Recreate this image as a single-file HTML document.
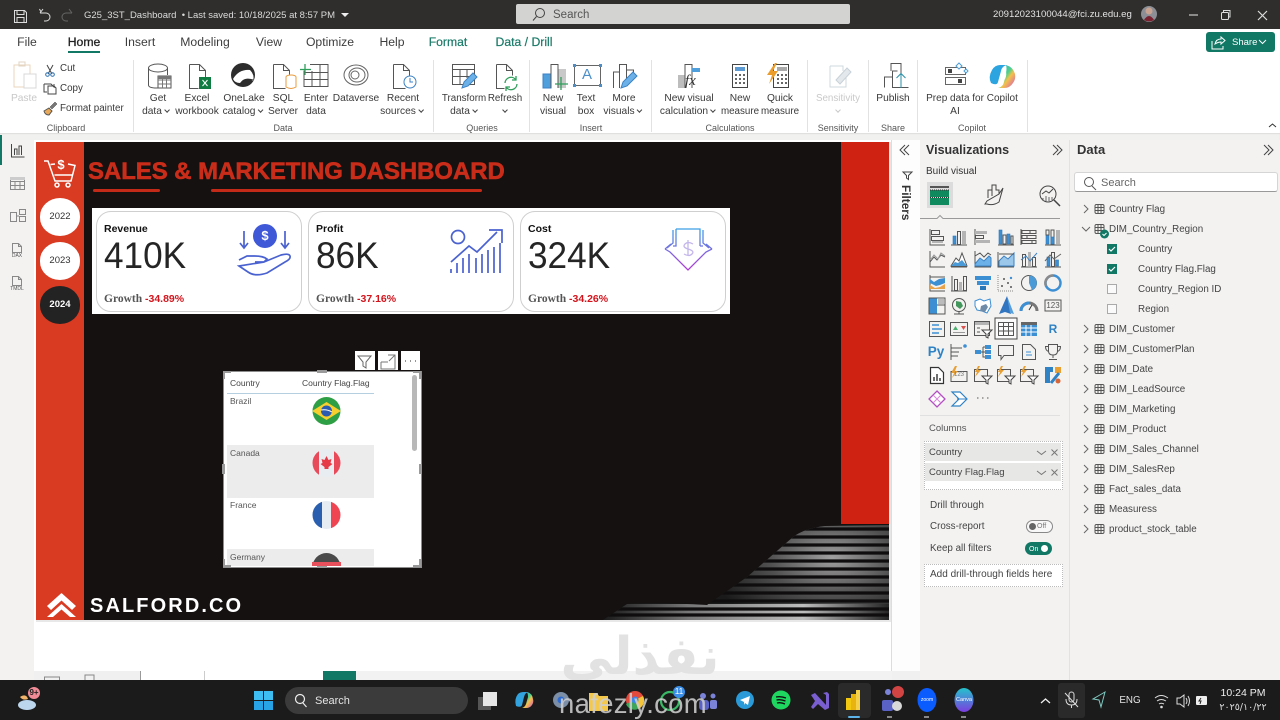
<!DOCTYPE html>
<html lang="en"><head><meta charset="utf-8"><title>G25_3ST_Dashboard</title>
<style>
html,body{margin:0;padding:0;width:1280px;height:720px;overflow:hidden;background:#f3f2f1;font-family:"Liberation Sans","DejaVu Sans",sans-serif;color:#333}
div{position:absolute}
.t{white-space:nowrap;line-height:14px}
.c{transform:translateX(-50%);text-align:center}
.tab{font-size:12.2px;top:35px;color:#3d3d3d}
.r{font-size:10.2px;color:#3a3a3a}
.gl{font-size:9px;color:#555;top:121px}
.sep{width:1px;top:60px;height:72px;background:#e2e2e2}
.d{font-size:9.8px;color:#444}
.v{display:inline-block;width:3px;height:3px;border-right:1px solid #444;border-bottom:1px solid #444;transform:rotate(45deg);margin:0 1px 2px 3px}
.k{fill:none;stroke:#555;stroke-width:1}
.h{fill:none;stroke:#888;stroke-width:1}
.b{fill:#3d8fd4;stroke:#2a78b8;stroke-width:.6}
.g{fill:#b4b4b4}
.w{fill:none;stroke:#fff;stroke-width:1.5}
.lb{fill:none;stroke:#3c82c4;stroke-width:1.2}
.kp{fill:none;stroke:#4a62d0;stroke-width:1.7}
.num{font-size:37px;line-height:38px;color:#252525;transform:scaleX(.95);transform-origin:left top;top:237px}
.gr{font:bold 11.5px/14px 'Liberation Serif',serif;color:#555;top:292px}
.gr span{font:bold 10.5px 'Liberation Sans',sans-serif;color:#d4141c}
</style></head><body>

<!-- chrome -->
<div style="left:0;top:0;width:1280px;height:29px;background:#2f2e2c"></div>
<div style="left:516px;top:4px;width:334px;height:20px;background:#d3d3d1;border-radius:2px"></div>
<div style="left:0;top:29px;width:1280px;height:104px;background:#fff"></div>
<div style="left:0;top:133px;width:1280px;height:7px;background:#f1f1f0;box-shadow:inset 0 1px 1px #dcdcdc"></div>
<div style="left:68px;top:51px;width:32px;height:2px;background:#117865"></div>
<div style="left:1206px;top:32px;width:69px;height:20px;background:#117865;border-radius:3px"></div>
<div class="sep" style="left:133px"></div><div class="sep" style="left:433px"></div><div class="sep" style="left:529px"></div><div class="sep" style="left:651px"></div><div class="sep" style="left:807px"></div><div class="sep" style="left:868px"></div><div class="sep" style="left:917px"></div><div class="sep" style="left:1027px"></div>

<!-- left nav + canvas -->
<div style="left:0;top:135px;width:2px;height:30px;background:#117865"></div>
<div style="left:34px;top:140px;width:858px;height:540px;background:#fff"></div>
<div style="left:34px;top:671px;width:106px;height:9px;background:#f0f0f0"></div>
<div style="left:140px;top:671px;width:1px;height:9px;background:#999"></div>
<div style="left:204px;top:671px;width:1px;height:9px;background:#ccc"></div>
<div style="left:323px;top:671px;width:33px;height:9px;background:#117865"></div>
<div style="left:356px;top:671px;width:536px;height:9px;background:#f2f2f2"></div>
<div style="left:891px;top:140px;width:1px;height:531px;background:#ddd"></div>
<div style="left:892px;top:140px;width:28px;height:531px;background:#fdfdfd"></div>
<div style="left:892px;top:671px;width:28px;height:9px;background:#f0f0f0"></div>
<div style="left:920px;top:140px;width:149px;height:540px;background:#f3f2f1"></div>
<div style="left:1069px;top:140px;width:1px;height:540px;background:#e2e2e2"></div>

<!-- report -->
<div style="left:36px;top:142px;width:853px;height:478px;background:#141110"></div>
<div style="left:36px;top:142px;width:48px;height:478px;background:#d93a22"></div>
<div style="left:841px;top:142px;width:48px;height:382px;background:#cf2213"></div>
<div style="left:889px;top:142px;width:2px;height:480px;background:#e6e6e6"></div>
<div style="left:36px;top:620px;width:855px;height:2px;background:#e8e8e8"></div>
<div style="left:93px;top:189px;width:67px;height:3px;background:#c32a18;border-radius:2px"></div>
<div style="left:211px;top:189px;width:271px;height:3px;background:#c32a18;border-radius:2px"></div>
<div style="left:40px;top:198px;width:40px;height:38px;background:#fff;border-radius:50%/48%"></div>
<div style="left:40px;top:242px;width:40px;height:38px;background:#fff;border-radius:50%/48%"></div>
<div style="left:40px;top:286px;width:40px;height:38px;background:#232323;border-radius:50%/48%"></div>
<div style="left:92px;top:208px;width:638px;height:106px;background:#fff"></div>
<div style="left:96px;top:211px;width:204px;height:99px;border:1px solid #cfcfcf;border-radius:15px;background:#fff"></div>
<div style="left:308px;top:211px;width:204px;height:99px;border:1px solid #cfcfcf;border-radius:15px;background:#fff"></div>
<div style="left:520px;top:211px;width:204px;height:99px;border:1px solid #cfcfcf;border-radius:15px;background:#fff"></div>

<!-- table visual -->
<div style="left:223px;top:371px;width:197px;height:195px;background:#fff;border:1px solid #8d8d8d"></div>
<div style="left:227px;top:393px;width:147px;height:1px;background:#b6cfe0"></div>
<div style="left:227px;top:445px;width:147px;height:53px;background:#ececec"></div>
<div style="left:227px;top:549px;width:147px;height:17px;background:#ececec"></div>
<div style="left:412px;top:375px;width:5px;height:76px;background:#b8b8b8;border-radius:3px"></div>
<div style="left:355px;top:351px;width:20px;height:19px;background:#fff"></div>
<div style="left:378px;top:351px;width:20px;height:19px;background:#fff"></div>
<div style="left:401px;top:351px;width:19px;height:19px;background:#fff"></div>

<!-- viz pane widgets -->
<div style="left:927px;top:182px;width:26px;height:26px;background:#dcdcdc"></div>
<div style="left:924px;top:441px;width:137px;height:47px;background:#fff;border:1px dotted #bbb"></div>
<div style="left:925px;top:443px;width:136px;height:18px;background:#e7e7e6"></div>
<div style="left:925px;top:463px;width:136px;height:18px;background:#e7e7e6"></div>
<div style="left:924px;top:564px;width:137px;height:21px;background:#fff;border:1px dotted #bbb"></div>
<div style="left:1026px;top:520px;width:25px;height:11px;border:1px solid #888;border-radius:7px;background:#f8f8f8"></div>
<div style="left:1029px;top:523px;width:7px;height:7px;background:#666;border-radius:50%"></div>
<div style="left:1025px;top:542px;width:27px;height:13px;background:#117865;border-radius:7px"></div>
<div style="left:1041px;top:545px;width:7px;height:7px;background:#fff;border-radius:50%"></div>
<div style="left:1074px;top:172px;width:202px;height:18px;background:#fff;border:1px solid #d5d5d5;border-bottom-color:#999;border-radius:3px"></div>

<!-- taskbar -->
<div style="left:0;top:680px;width:1280px;height:40px;background:#1b1b1b"></div>
<div style="left:285px;top:687px;width:183px;height:27px;background:#3b3b3b;border-radius:14px"></div>
<div style="left:838px;top:683px;width:33px;height:35px;background:#2a2a2a;border-radius:4px"></div>
<div style="left:1058px;top:683px;width:27px;height:35px;background:#2a2a2a;border-radius:3px"></div>
<div style="left:848px;top:716px;width:12px;height:2px;background:#5cb4e8;border-radius:1px"></div>
<div style="left:887px;top:716px;width:5px;height:2px;background:#888"></div>
<div style="left:924px;top:716px;width:5px;height:2px;background:#888"></div>
<div style="left:961px;top:716px;width:5px;height:2px;background:#888"></div>

<svg width="1280" height="720" viewBox="0 0 1280 720" style="position:absolute;left:0;top:0">
<defs>
<clipPath id="wave"><path d="M603 620L627 604Q660 602 707 605L747 577L793 537Q805 528 825 526L889 525V620Z"/></clipPath>
<radialGradient id="lit1" gradientUnits="userSpaceOnUse" cx="832" cy="558" r="125" gradientTransform="translate(832 558) scale(1 .6) translate(-832 -558)"><stop offset="0" stop-color="#a0a0a0"/><stop offset=".5" stop-color="#505050"/><stop offset="1" stop-color="#1a1a1a"/></radialGradient>
<linearGradient id="cost" x1="0" x2="0" y1="0" y2="1"><stop offset="0" stop-color="#3b9fe8"/><stop offset="1" stop-color="#b13ad6"/></linearGradient>
<linearGradient id="cop" x1="0" x2="1" y1="0" y2="1"><stop offset="0" stop-color="#2fa8e8"/><stop offset=".45" stop-color="#4fcf8a"/><stop offset=".6" stop-color="#f4c14a"/><stop offset="1" stop-color="#d24ec8"/></linearGradient>
<linearGradient id="canva" x1="0" x2="0" y1="0" y2="1"><stop offset="0" stop-color="#25c3cc"/><stop offset="1" stop-color="#7c3de0"/></linearGradient>
<linearGradient id="wv2" gradientUnits="userSpaceOnUse" x1="603" x2="889" y1="0" y2="0"><stop offset="0" stop-color="#1a1a1a"/><stop offset=".3" stop-color="#777"/><stop offset=".7" stop-color="#bdbdbd"/><stop offset="1" stop-color="#252525"/></linearGradient>
<clipPath id="cf1"><circle cx="326.5" cy="411" r="14"/></clipPath>
<clipPath id="cf2"><circle cx="326.5" cy="463" r="14"/></clipPath>
<clipPath id="cf3"><circle cx="326.5" cy="515" r="14"/></clipPath>
<clipPath id="cf4"><rect x="300" y="550" width="60" height="16"/></clipPath>
</defs>

<!-- stripes -->
<g clip-path="url(#wave)">
<rect x="600" y="520" width="290" height="100" fill="#1a1a1a"/>
<rect x="600" y="520" width="290" height="100" fill="url(#lit1)"/>
<rect x="603" y="604" width="286" height="16" fill="url(#wv2)"/>
<path stroke="#0f0d0d" stroke-width="3.2" fill="none" d="M600 529H890M600 537H890M600 545H890M600 553H890M600 561H890M600 569H890M600 577H890M600 585H890M600 593H890M600 601H890M600 609H890M600 615H890"/>
</g>

<!-- titlebar icons -->
<g fill="none" stroke="#ddd" stroke-width="1">
<path d="M14.5 10.500h10l2 2v10h-12zM17 10.500v4h7v-4M17 22.500v-5h7v5"/>
<path d="M41 12l-1.500-3 M40 13h6a4 4 0 0 1 0 8h-2M40 13l3-4"/>
</g>
<path d="M67 13h-1a4 4 0 0 0 0 8h2M72 13h-5M72 13l-3-4" fill="none" stroke="#666"/>
<path d="M341 13h8l-4 4z" fill="#eee"/>
<circle cx="540" cy="13" r="4.500" fill="none" stroke="#444"/><path d="M536.500 16.500l-3.500 4" stroke="#444" fill="none"/>
<circle cx="1149" cy="14" r="8" fill="#8c8f96"/><path d="M1144 20q5-8 10 0q-5 3-10 0z" fill="#7a2230"/><circle cx="1149" cy="11" r="3.500" fill="#c9a492"/>
<path d="M1189 15h9" stroke="#aaa" stroke-width="1.500"/>
<g fill="none" stroke="#ddd"><rect x="1221.500" y="12.500" width="7" height="7" rx="1"/><path d="M1223.500 12v-1.500h6.500v6.500h-1.500"/><path d="M1258 11l9 9M1267 11l-9 9" stroke-width="1.200"/></g>
<g fill="none" stroke="#fff"><path d="M1212 41v8h11v-3M1215 44q1-5 6-5v-2l4 3.500-4 3.500v-2q-3 0-6 2z"/><path d="M1259 40l3.500 3.500 3.500-3.500"/></g>
<path d="M1269 127l3.500-3 3.500 3" fill="none" stroke="#333"/>

<!-- bottom strip marks -->
<g fill="none" stroke="#888"><path d="M44.500 680v-3h15v3M85 680v-5h9v5"/></g>

<!-- clipboard -->
<g fill="none" stroke="#d8d8d8"><path d="M14 65h16v22H14z" stroke="#e9d6bc"/><rect x="19" y="62" width="6" height="4" stroke="#e0d5c5"/><rect x="24" y="74" width="12" height="14" fill="#fff"/></g>
<g fill="none" stroke="#444"><path d="M47 65l5 9M53 65l-5 9"/><circle cx="47.500" cy="74.500" r="1.800" stroke="#2a6fb0"/><circle cx="52.500" cy="74.500" r="1.800" stroke="#2a6fb0"/><path d="M44 84h7l3 3v-3M44 84v8h3M48 86h6l2 2v6h-8z"/></g>
<path d="M44 111l5-3 3 3-3 4q-4 0-5-4z" fill="#e8a95a" stroke="#555"/><path d="M50 107l5-5 2 2-5 5z" fill="#777" stroke="#444" stroke-width=".5"/>

<!-- data group -->
<g class="k">
<path class="k" d="M148.500 68v17q0 3 8 3h2M167.500 68v7"/><ellipse class="k" cx="158" cy="68" rx="9.500" ry="4"/>
<path class="k" d="M189.500 64.500h10l6 6v7M189.500 64.500v24h9M199.500 64.500v6h6"/>
<path class="k" d="M273.500 64.500h10l6 6v4M273.500 64.500v24h12M283.500 64.500v6h6"/>
<path class="k" d="M393.500 64.500h10l6 6v5M393.500 64.500v24h12M403.500 64.500v6h6"/>
</g>
<rect x="158" y="76" width="13" height="12" fill="#fff" stroke="#555"/><path d="M158 80h13M158 84h13M162.500 76v12M166.500 76v12" stroke="#777" fill="none"/><rect x="158" y="76" width="13" height="3" fill="#777"/>
<rect x="199" y="77" width="12" height="12" fill="#107c41"/><path d="M202.500 80l5 6M207.500 80l-5 6" stroke="#fff" fill="none"/>
<circle cx="243" cy="75" r="12" fill="#2d2d2d"/><path d="M233 79q6-10 17-9 5 5 3 11-7-5-13 2-5 0-7-4z" fill="#fff"/><path d="M240 85q3-8 13-5" stroke="#2d2d2d" fill="none"/>
<ellipse cx="291" cy="77" rx="5" ry="2" fill="#fff" stroke="#e89a3c"/><path d="M286 77v10q5 3 10 0V77" fill="#fff" stroke="#e89a3c"/>
<g class="k"><path class="k" d="M310 64.500h18v22h-24v-16M304 72.500h24M304 79.500h24M312 71v15M320 64v22"/></g><path d="M305 64v11M300 69.500h11" stroke="#2f9e5b" stroke-width="1.300" fill="none"/>
<g fill="none" stroke="#666"><ellipse cx="356" cy="75" rx="12" ry="10"/><ellipse cx="357" cy="75" rx="8" ry="7"/><ellipse cx="355" cy="75" rx="4" ry="4"/></g>
<circle cx="410" cy="82" r="6" fill="#fff" stroke="#3c82c4"/><path d="M410 78v4h3" stroke="#3c82c4" fill="none"/>

<!-- queries -->
<g class="k"><path class="k" d="M452.500 64.500h22v20h-22zM452.500 69.500h22M452.500 76.500h20M460 70v14M467 70v8"/></g><path d="M462 88l2-6 9-9 4 4-9 9z" fill="#6cb2e8" stroke="#3c82c4"/>
<g class="k"><path class="k" d="M496.500 64.500h10l6 6v5M496.500 64.500v24h8M506.500 64.500v6h6"/></g><g fill="none" stroke="#2f9e5b" stroke-width="1.300"><path d="M505 83a6 6 0 0 1 11-3M517 84a6 6 0 0 1-11 3M516 76v4h-4M506 91v-4h4"/></g>

<!-- insert -->
<rect x="543" y="74" width="8" height="14" fill="#4e9fdc" stroke="#3c82c4"/><rect x="558" y="69" width="8" height="19" fill="#c8c8c8"/><path d="M551 88V64.500h7V88" fill="none" stroke="#555"/><path d="M561 77v13M555 84h13" stroke="#2f9e5b" stroke-width="1.300"/>
<rect x="574.500" y="65.500" width="26" height="20" fill="none" stroke="#666"/><g fill="#4c8fc8"><rect x="573" y="64" width="3" height="3"/><rect x="599" y="64" width="3" height="3"/><rect x="573" y="84" width="3" height="3"/><rect x="599" y="84" width="3" height="3"/></g>
<path d="M613.500 88V72h6v16M619.500 88V64.500h7V84M626.500 70h7v5" fill="none" stroke="#555"/><path d="M621 88l2-6 10-10 4 4-10 10z" fill="#6cb2e8" stroke="#3c82c4"/>

<!-- calcs -->
<rect x="678" y="75" width="7" height="13" fill="#bdbdbd"/><path d="M685 88V64.500h7V88" fill="none" stroke="#555"/><rect x="692" y="68" width="8" height="4" fill="#4e9fdc"/>
<rect x="732.500" y="64.500" width="15" height="23" fill="#fff" stroke="#444"/><rect x="735" y="67" width="10" height="4" fill="#5c9ad4"/><path d="M735 75h2M739 75h2M743 75h2M735 79h2M739 79h2M743 79h2M735 83h2M739 83h2M743 83h2" stroke="#333" stroke-width="1.500"/>
<rect x="773.500" y="64.500" width="15" height="23" fill="#fff" stroke="#444"/><rect x="777" y="67" width="10" height="4" fill="#aaa"/><path d="M777 75h2M781 75h2M785 75h2M777 79h2M781 79h2M785 79h2M777 83h2M781 83h2M785 83h2" stroke="#333" stroke-width="1.500"/><path d="M775 63l-8 12h5l-3 9 9-13h-5l4-8z" fill="#eb9d2c"/>

<!-- sensitivity -->
<path d="M830 66h13v5M830 66v21h16V78" fill="none" stroke="#cfd8de"/><path d="M836 80l11-12 4 4-11 12z" fill="#e3e8ec" stroke="#c8d2d8"/>
<!-- publish -->
<path d="M884.500 87.500V77h8v10.500h16M892.500 80V71h5M891 71v-7.500h10V80" fill="none" stroke="#555"/><path d="M901 88V74M896.500 78l4.500-4.500 4.500 4.500" fill="none" stroke="#2a8fa8"/>
<!-- prep -->
<rect x="945.500" y="67.500" width="20" height="7" fill="#fff" stroke="#666"/><rect x="945.500" y="77.500" width="20" height="7" fill="#fff" stroke="#666"/><rect x="948" y="69" width="4" height="4" fill="#444"/><rect x="958" y="79" width="4" height="4" fill="#444"/><path d="M959 63l3 3-3 3-3-3zM966 69l2 2-2 2-2-2z" fill="#fff" stroke="#4c9ed8"/>
<path d="M991 83q-3-6 1-13 3-5 8-5h7q-5 1-6 6l-3 11q-1 4-7 1z" fill="#2ca4e0"/><path d="M1006 65q7 2 9 9 1 5-2 9-3 5-9 5h-6q5-1 6-6l2-9q1-5 0-8z" fill="url(#cop)"/><ellipse cx="1003" cy="76" rx="3" ry="6" fill="#fff" transform="rotate(15 1003 76)"/>

<!-- left nav -->
<g fill="none" stroke="#444"><path d="M11.500 144v13h13M14.500 155v-6h2.500v6M19 155v-9h2.500v9" /></g>
<g fill="none" stroke="#888"><path d="M10.500 177.500h14v12h-14zM10.500 181.500h14M10.500 185.500h14M15 181v8M20 181v8"/><rect x="10" y="177" width="15" height="3" fill="#ccc" stroke="none"/>
<path d="M10.500 212.500h6v9h-6zM19.500 209.500h6v5h-6zM19.500 216.500h6v5h-6zM16 216h3"/>
<path d="M12.500 243.500h6l3 3v6h-9zM18.500 243.500v3h3M12.500 276.500h6l3 3v6h-9zM18.500 276.500v3h3"/></g>

<!-- report graphics -->
<g class="w"><path class="w" d="M44 161h4l7 20h16l4-15.500-7-1.500M55 164l-4.500.5M54.500 175h18"/><circle class="w" cx="57" cy="185" r="2"/><circle class="w" cx="68" cy="185" r="2"/></g>
<path d="M47 606l14.500-13L76 606l-4 4-10.500-9.500L51 610zM47 617l14.500-13L76 617h-6l-8.500-7.500L53 617z" fill="#fff"/>

<!-- revenue icon -->
<circle cx="265" cy="236" r="12" fill="#3e58d8"/>
<g class="kp"><path class="kp" d="M244 231v17M240 243l4 5 4-5M285 231v17M281 243l4 5 4-5M239 260l8-4h8q8 0 12 3l-3 3h-9M264 262l17-7q8-2 9 1t-5 6l-18 11q-12 4-19-1l-9-6z"/></g>

<!-- profit icon -->
<circle cx="458" cy="237" r="6.500" class="kp"/>
<g class="kp"><path class="kp" d="M451 262l18-16 8 6 20-20M489 230h13v13M451 269v4M457 263v10M463 258v15M469 254v19M476 258v15M482 254v19M488 250v23M494 247v26M500 243v30"/></g>
<!-- cost icon -->
<path d="M676 229h24v17M676 229v17h-3M700 246h3M665 249l5 3 18 18 18-18 6-3M665 249l6-5M712 249l-6-5M673 230v13l-6 5M703 230v13l6 5" fill="none" stroke="url(#cost)" stroke-width="1.300"/>
<path d="M688 240v16M693 244q-5-3-8 0t3 5q7 2 4 5t-8 0" fill="none" stroke="#c3b6ec" stroke-width="1.300"/>

<!-- visual header icons -->
<g fill="none" stroke="#666"><path d="M358 356h13l-5 6v6l-3-2v-4z"/><path d="M381 362v7h14V355h-7M388 362h-7M395 355l-6 6M391 355h4v4" stroke="#777"/></g>
<path d="M405 361h1M410 361h1M415 361h1" stroke="#555" stroke-width="1.200"/>
<!-- handles -->
<g fill="#9a9a9a"><path d="M223 371h8v2h-6v6h-2zM421 371h-8v2h6v6h2zM223 567h8v-2h-6v-6h-2zM421 567h-8v-2h6v-6h2z"/><rect x="317" y="370" width="10" height="3"/><rect x="317" y="565" width="10" height="3"/><rect x="222" y="464" width="3" height="10"/><rect x="419" y="464" width="3" height="10"/></g>

<!-- flags -->
<g clip-path="url(#cf1)"><rect x="312" y="397" width="29" height="28" fill="#2e9f44"/><path d="M312 411l14.500-9 14.500 9-14.500 9z" fill="#f7cf2e"/><circle cx="326.500" cy="411" r="5.500" fill="#2a5bb0"/><path d="M321 410q6-1 11 2" stroke="#fff" fill="none"/></g>
<g clip-path="url(#cf2)"><rect x="312" y="449" width="29" height="28" fill="#e8edf2"/><rect x="312" y="449" width="7" height="28" fill="#e84a5a"/><rect x="334" y="449" width="7" height="28" fill="#e84a5a"/><path d="M326.500 456l2 4 3-1-1 4 2 1-4 3v2h-4v-2l-4-3 2-1-1-4 3 1z" fill="#e63a46"/></g>
<g clip-path="url(#cf3)"><rect x="312" y="501" width="10" height="28" fill="#2a5fb0"/><rect x="322" y="501" width="9" height="28" fill="#e6ecf2"/><rect x="331" y="501" width="10" height="28" fill="#ef4452"/></g>
<g clip-path="url(#cf4)"><circle cx="326.500" cy="567" r="14" fill="#4a4a4a"/><rect x="312" y="562" width="29" height="6" fill="#e8505c"/></g>

<!-- right strip -->
<g fill="none" stroke="#444"><path d="M909 145l-5 5 5 5M905 145l-5 5 5 5"/><path d="M903 172h9l-3.500 3.500v4l-2-1.500v-2.500z"/><path d="M1053 145l5 5-5 5M1057 145l5 5-5 5M1264 145l5 5-5 5M1268 145l5 5-5 5"/></g>

<!-- viz tabs -->
<rect x="930" y="186" width="19" height="2" fill="#555"/><rect x="930" y="190" width="19" height="7" fill="#0f8a5f"/><rect x="930" y="198" width="19" height="7" fill="#0f8a5f"/><path d="M930 197.500h19M930 190h19" stroke="#333" stroke-dasharray="1 1"/>
<g fill="none" stroke="#444"><path d="M988 198v-8h4v-5h4v5h3v4M992 190v6M985 204l2-3 12-7 4-6-4 14q-6 4-12 2z"/></g>
<g fill="none" stroke="#444"><circle cx="1048" cy="194" r="8"/><path d="M1054 200l6 6" stroke-width="1.500"/><path d="M1042 194l4-3 3 2 4-4"/><path d="M1043 201v-3M1046 201v-5M1049 201v-4M1052 200v-3" stroke="#666"/></g>
<path d="M920 218.500h17l3-3 3 3h117" fill="none" stroke="#999"/>
<path d="M920 415.500h140" stroke="#e0e0e0"/>

<!-- viz grid -->
<g transform="translate(937,237)"><path class="k" d="M-7-8V8H8"/><rect class="k" x="-5.500" y="-6.500" width="8" height="4"/><rect class="k" x="-5.500" y="-.5" width="12" height="4"/><rect class="g" x="-5" y="4" width="11" height="2"/></g>
<g transform="translate(959,237)"><path class="k" d="M-8 8H8"/><rect class="b" x="-6" y="-1" width="3" height="8"/><rect class="k" x="-1.500" y="-5.500" width="3" height="13"/><rect class="g" x="3" y="-6" width="4" height="13"/></g>
<g transform="translate(983,237)"><path class="k" d="M-8-8V8"/><rect class="g" x="-8" y="-6" width="12" height="3"/><rect class="k" x="-7.500" y="-1.500" width="8" height="3"/><rect class="g" x="-8" y="3" width="15" height="3"/></g>
<g transform="translate(1006,237)"><path class="k" d="M-8 8H8"/><rect class="b" x="-7" y="-7" width="3" height="14"/><rect class="k" x="-3" y="-2" width="3" height="9"/><rect class="b" x="1" y="-3" width="3" height="10"/><rect class="k" x="5" y="-1" width="2" height="8"/></g>
<g transform="translate(1029,237)"><path class="k" d="M-8-8V8"/><path class="k" d="M-7-6.500H7v3H-7zM-7-1.500H7v3H-7zM-7 3.500H7v3H-7zM1-7v4M-2-2v4M3 3v4"/></g>
<g transform="translate(1053,237)"><path class="k" d="M-8 8H8"/><rect class="b" x="-7" y="-2" width="3" height="9"/><rect class="k" x="-7" y="-7" width="3" height="5"/><rect class="k" x="-2" y="-7" width="3" height="14"/><rect class="b" x="-2" y="0" width="3" height="7"/><rect class="g" x="3" y="-7" width="4" height="14"/></g>

<g transform="translate(937,259)"><path class="k" d="M-7-8V8H8M-7 3l4-5 3 3 4-5 4 2"/><path d="M-6 0l3-4 4 4 3-6 4 3" fill="none" stroke="#999"/></g>
<g transform="translate(959,259)"><path d="M-8 7L-3-1l3 3 3-8 5 13z" fill="#fff" stroke="#555"/><path d="M-8 7l4-4 3 1 4-3 5 6z" fill="#4a9ad8"/><path class="k" d="M-8 8H8"/></g>
<g transform="translate(983,259)"><path class="k" d="M-8-8V8H8M-8-3l5-3 4 4 4-4 3 2"/><path d="M-8 5l5-6 4 3 5-5 2 2v8H-8z" fill="#6cb2e8" stroke="#3c82c4"/></g>
<g transform="translate(1006,259)"><path class="k" d="M-8-7V8H8"/><path d="M-7 2l5-5 4 3 6-6V7H-7z" fill="#9bc7ea" stroke="#3c82c4"/><path d="M-7-5H8" stroke="#555"/></g>
<g transform="translate(1029,259)"><path class="k" d="M-8 8H8"/><rect class="k" x="-6.500" y="-4.500" width="3" height="12"/><rect class="g" x="-1" y="-7" width="3" height="14"/><rect class="k" x="3.500" y="-1.500" width="3" height="9"/><path d="M-8 1l5-4 4 5 7-8" fill="none" stroke="#3c82c4"/></g>
<g transform="translate(1053,259)"><path class="k" d="M-8 8H8"/><rect class="b" x="-6" y="-2" width="3" height="9"/><rect class="k" x="-1.500" y="-6.500" width="3" height="14"/><rect class="b" x="2.500" y="1" width="3" height="6"/><path d="M-8 2l5-6 4 4 7-5" fill="none" stroke="#666"/></g>

<g transform="translate(937,283)"><path class="k" d="M-7-8V8H8M-7-6H8"/><path d="M-7-4l4 3 5-3 6-1v5l-5 2-4 1-6-3z" fill="#3d8fd4"/><path d="M-7 2l5 3 5-1 5-3v5H-7z" fill="#e8a24a"/></g>
<g transform="translate(959,283)"><path class="k" d="M-8 8H8M-7-7V8"/><rect class="k" x="-4.500" y="-3.500" width="3" height="11"/><rect class="g" x="0" y="-1" width="3" height="8"/><rect class="k" x="4.500" y="-6.500" width="3" height="14"/></g>
<g transform="translate(983,283)"><rect x="-8" y="-7" width="16" height="4" fill="#3d8fd4"/><rect x="-6" y="-2" width="12" height="4" fill="#3d8fd4"/><rect x="-3" y="3" width="6" height="4" fill="#2a78b8"/></g>
<g transform="translate(1006,283)"><path class="h" d="M-8-8V8H8" stroke-dasharray="1 1"/><g fill="#555"><circle cx="-4" cy="3" r="1"/><circle cx="-2" cy="-4" r="1"/><circle cx="2" cy="0" r="1"/><circle cx="5" cy="4" r="1"/></g><circle cx="5" cy="-5" r="1.200" fill="#3d8fd4"/></g>
<g transform="translate(1029,283)"><circle class="k" r="7.500"/><path d="M0 0V-7.500A7.500 7.500 0 0 1 3 7z" fill="#4a9ad8"/></g>
<g transform="translate(1053,283)"><circle r="7.500" fill="none" stroke="#3d8fd4" stroke-width="2.500"/><path d="M0-7.500A7.500 7.500 0 0 0-7 3" fill="none" stroke="#8a8a8a" stroke-width="2.500"/></g>

<g transform="translate(937,306)"><rect x="-8" y="-8" width="8" height="16" fill="#3d8fd4"/><rect class="k" x="-8" y="-8" width="16" height="16"/><rect x="1" y="-7" width="6" height="5" fill="#bbb"/><path class="k" d="M0-1H8"/></g>
<g transform="translate(959,306)"><circle class="k" r="6.500" cy="-1"/><path d="M-3-5l5 1 2 4-3 3-4-3z" fill="#43975c"/><path class="k" d="M-5 8H5M0 6v2"/></g>
<g transform="translate(983,306)"><path d="M-8-5l5-2 4 2 6-2 1 7-4 7-5-2-5-1-2-4z" fill="#fff" stroke="#3d8fd4"/><path d="M-2 0l5-2 2 3-3 5-5-1z" fill="#6f8ba8"/></g>
<g transform="translate(1006,306)"><path d="M1-10L-7 8l6-2 6 2z" fill="#3174c0"/><path d="M1-10l7 18-4-1z" fill="#55a0dc"/></g>
<g transform="translate(1029,306)"><path d="M-8 5a8 8 0 0 1 16 0" fill="none" stroke="#777" stroke-width="3"/><path d="M-8 5a8 8 0 0 1 8-8" fill="none" stroke="#3d8fd4" stroke-width="3"/><path d="M0 4l3-5" stroke="#333"/></g>
<g transform="translate(1053,306)"><rect class="k" x="-8" y="-6" width="16" height="11"/></g>

<g transform="translate(937,329)"><rect class="k" x="-7.500" y="-7.500" width="15" height="15"/><path d="M-5-4H2M-5 0H5M-5 4H2" stroke="#3d8fd4" stroke-width="1.500"/></g>
<g transform="translate(959,329)"><rect class="k" x="-8.500" y="-6.500" width="17" height="13"/><path d="M-6 1l2.500-4 2.500 4z" fill="#4cae6e"/><path d="M2-3h5L4.500 1z" fill="#d9534f"/><path d="M-6 3.500H6" stroke="#999"/></g>
<g transform="translate(983,329)"><rect class="k" x="-8.500" y="-7.500" width="15" height="14"/><rect class="g" x="-8" y="-7" width="14" height="3"/><path class="k" d="M-6-1h3M-6 3h3"/><path d="M-1 1H9L5 5V9L3 8V5z" fill="#fff" stroke="#444"/></g>
<g transform="translate(1006,329)"><rect x="-11" y="-11" width="22" height="21" fill="#fbfbfb" stroke="#444"/><rect class="k" x="-7.500" y="-6.500" width="15" height="13"/><path class="k" d="M-7.500-2.500h15M-7.500 2h15M-2.500-6.500v13M2.500-6.500v13"/></g>
<g transform="translate(1029,329)"><rect x="-8" y="-7" width="16" height="14" fill="#3d8fd4"/><rect x="-8" y="-7" width="16" height="3" fill="#666"/><path d="M-8-1H8M-8 3H8M-3-4V7M2-4V7" stroke="#fff"/></g>

<g transform="translate(959,352)"><path class="k" d="M-8-8V8M-8-4H3M-8 0H0M-8 4H-1"/><circle cx="6" cy="-6" r="1.800" fill="#3d8fd4"/></g>
<g transform="translate(983,352)"><rect x="-8" y="-2" width="6" height="4" fill="#3d8fd4"/><rect x="2" y="-7" width="6" height="4" fill="#3d8fd4"/><rect x="2" y="-2" width="6" height="4" fill="#3d8fd4"/><rect x="2" y="3" width="6" height="4" fill="#3d8fd4"/><path class="k" d="M-2 0H2M0-5V5H2M0-5H2"/></g>
<g transform="translate(1006,352)"><path class="k" d="M-7.500-6.500h15v10H-2l-3 4v-4h-2.500z"/></g>
<g transform="translate(1029,352)"><path class="k" d="M-6.500-7.500h8l5 5v10h-13z"/><path d="M-3 0h5M-3 3h6" stroke="#3d8fd4"/></g>
<g transform="translate(1053,352)"><path class="k" d="M-4.500-7.500h9V-1q0 4-4.500 4t-4.500-4zM-4.500-5.500h-3q0 4 3 5M4.500-5.500h3q0 4-3 5M0 3v3M-4 7.500h8"/></g>

<g transform="translate(937,375)"><path d="M-6.500-7.500h8l5 5v11h-13z" fill="#fff" stroke="#333" stroke-width="1.200"/><path d="M-3 6V2M0 6V-1M3 6V3" stroke="#333" stroke-width="1.400"/></g>
<g transform="translate(959,375)"><rect class="k" x="-8" y="-3.500" width="16" height="10"/><path d="M-4-9l-4 7h3l-2 5 6-7H-4l2-5z" fill="#e8a035"/></g>
<g transform="translate(983,375)"><rect class="k" x="-8.500" y="-5.500" width="13" height="12"/><path d="M-1 1H9L5 5V9L3 8V5z" fill="#fff" stroke="#444"/><path d="M-5-9l-3 6h2l-2 5 6-7H-5l2-4z" fill="#e8a035"/></g>
<g transform="translate(1006,375)"><rect class="k" x="-8.500" y="-5.500" width="13" height="12"/><path d="M-1 1H9L5 5V9L3 8V5z" fill="#fff" stroke="#444"/><path d="M-5-9l-3 6h2l-2 5 6-7H-5l2-4z" fill="#e8a035"/></g>
<g transform="translate(1029,375)"><rect class="k" x="-8.500" y="-5.500" width="13" height="12"/><path d="M-1 1H9L5 5V9L3 8V5z" fill="#fff" stroke="#444"/><path d="M-5-9l-3 6h2l-2 5 6-7H-5l2-4z" fill="#e8a035"/></g>
<g transform="translate(1053,375)"><path d="M-8-8h8v5h-3V8h-5z" fill="#2f82c4"/><rect x="2" y="-8" width="6" height="6" fill="#e8a035"/><path d="M-2 8L6-2" stroke="#2f82c4" stroke-width="3"/><circle cx="5" cy="6" r="2.500" fill="#d4663a"/></g>

<g transform="translate(937,399)"><path d="M0-8L8 0 0 8-8 0z" fill="#fff" stroke="#b14fc0" stroke-width="1.300"/><path d="M-4-4L4 4M4-4L-4 4" stroke="#d986dd"/></g>
<g transform="translate(960,399)"><path d="M-8-7h8l7 7-7 7H-8l7-7z" fill="#fff" stroke="#2f82c4" stroke-width="1.200"/><path d="M-3 0h9" stroke="#2f82c4"/></g>
<path d="M977 398h1.500M982 398h1.500M987 398h1.500" stroke="#555"/>

<!-- well chevrons -->
<g fill="none" stroke="#777"><path d="M1037 451l4.500 3.500 4.500-3.500M1037 471l4.500 3.500 4.500-3.500M1051.500 449.500l6 6M1057.500 449.500l-6 6M1051.500 469.500l6 6M1057.500 469.500l-6 6"/></g>

<!-- data pane -->
<circle cx="1089" cy="182" r="4.500" fill="none" stroke="#555"/><path d="M1092 186l4 4" stroke="#555" fill="none"/>
<g fill="none" stroke="#666"><path d="M1084 205l4 4-4 4M1084 325l4 4-4 4M1084 345l4 4-4 4M1084 365l4 4-4 4M1084 385l4 4-4 4M1084 405l4 4-4 4M1084 425l4 4-4 4M1084 445l4 4-4 4M1084 465l4 4-4 4M1084 485l4 4-4 4M1084 505l4 4-4 4M1084 525l4 4-4 4M1082 227l4 4 4-4"/></g>
<defs><g id="tb"><rect x="-4.500" y="-4.500" width="9" height="9" rx="1.500" fill="none" stroke="#555"/><path d="M-4.500-1.500h9M-4.500 1.500h9M-1.500-4.500v9M1.500-4.500v9" stroke="#555"/></g></defs>
<use href="#tb" x="1099.500" y="209"/><use href="#tb" x="1099.500" y="229"/><use href="#tb" x="1099.500" y="329"/><use href="#tb" x="1099.500" y="349"/><use href="#tb" x="1099.500" y="369"/><use href="#tb" x="1099.500" y="389"/><use href="#tb" x="1099.500" y="409"/><use href="#tb" x="1099.500" y="429"/><use href="#tb" x="1099.500" y="449"/><use href="#tb" x="1099.500" y="469"/><use href="#tb" x="1099.500" y="489"/><use href="#tb" x="1099.500" y="509"/><use href="#tb" x="1099.500" y="529"/>
<circle cx="1104.500" cy="234" r="4.500" fill="#117865"/><path d="M1102.500 234l1.500 1.500 2.500-2.500" stroke="#fff" fill="none"/>
<rect x="1107" y="244" width="10" height="10" fill="#117865"/><path d="M1109 249l2 2 4-4" stroke="#fff" fill="none" stroke-width="1.200"/>
<rect x="1107" y="264" width="10" height="10" fill="#117865"/><path d="M1109 269l2 2 4-4" stroke="#fff" fill="none" stroke-width="1.200"/>
<rect x="1107.500" y="284.500" width="9" height="9" fill="#fafafa" stroke="#aaa"/><rect x="1107.500" y="304.500" width="9" height="9" fill="#fafafa" stroke="#aaa"/>

<!-- taskbar icons -->
<ellipse cx="27" cy="705" rx="9" ry="5" fill="#bcd6ee"/><path d="M20 697q6-4 8 2-5 2-8-2z" fill="#f2b36a"/><circle cx="34" cy="693" r="6" fill="#f08a96"/>
<g fill="#3dbdf2"><rect x="254" y="691" width="9" height="9"/><rect x="264" y="691" width="9" height="9"/><rect x="254" y="701" width="9" height="9" fill="#28a4e6"/><rect x="264" y="701" width="9" height="9" fill="#28a4e6"/></g>
<circle cx="300" cy="699" r="4.500" fill="none" stroke="#eee" stroke-width="1.200"/><path d="M303 703l3.500 4" stroke="#eee" stroke-width="1.200"/>
<rect x="478" y="697" width="13" height="13" fill="#555"/><rect x="483" y="692" width="14" height="14" fill="#e6e6e6"/>
<path d="M516 706q-2-7 2-12 2-2 6-2h4q-3 1-4 5l-2 8q-1 3-6 1z" fill="#33a3e0"/><path d="M527 692q5 1 6 7 1 3-1 6-2 3-6 3h-4q3-1 4-4l2-7q0-3-1-5z" fill="url(#cop)"/>
<circle cx="561" cy="700" r="8" fill="#7c8fa6"/><circle cx="561" cy="700" r="3.500" fill="#2d6bd0"/>
<path d="M589 693h8l2 3h9v15h-19z" fill="#f4c84a"/>
<circle cx="635" cy="700" r="9" fill="#e24a3c"/><path d="M635 700l8-4a9 9 0 0 1-5 13z" fill="#f4c43a"/><path d="M635 700l3 9a9 9 0 0 1-12-5z" fill="#3ea659"/><circle cx="635" cy="700" r="3.500" fill="#3c86e8"/>
<circle cx="670" cy="701" r="9" fill="none" stroke="#38b864" stroke-width="2.200"/><circle cx="679" cy="692" r="6" fill="#3c8fe8"/>
<circle cx="703" cy="696" r="3" fill="#7b83d8"/><circle cx="713" cy="696" r="2.500" fill="#7b83d8"/><rect x="699" y="700" width="10" height="10" rx="3" fill="#5a62c8"/><rect x="710" y="700" width="7" height="9" rx="2" fill="#7b83d8"/>
<circle cx="745" cy="700" r="9" fill="#2a9bd8"/><path d="M740 700l10-4-2 9-3-2-1 2v-3z" fill="#fff"/>
<circle cx="781" cy="700" r="9.500" fill="#1ed760"/><path d="M776 697q5-1 10 1M776.500 700q4-1 9 1M777 703q4-1 8 1" stroke="#111" stroke-width="1.300" fill="none"/>
<path d="M811 695l4-2 11 12v-10l-3-2 4-1 2 2v14l-4 2-7-6-5 5-2-2 4-6z" fill="#7a5fd0"/>
<rect x="846" y="698" width="5" height="12" fill="#f2c811"/><rect x="851" y="694" width="5" height="16" fill="#e8b30e"/><rect x="856" y="690" width="4" height="20" fill="#f5d04a"/>
<circle cx="888" cy="692" r="3" fill="#7b83d8"/><circle cx="898" cy="692" r="6" fill="#d24444"/><rect x="882" y="700" width="11" height="11" rx="2" fill="#5a62c8"/><circle cx="897" cy="706" r="5" fill="#d8d8d8"/>
<ellipse cx="927" cy="700" rx="9.500" ry="12" fill="#0b5cff"/>
<ellipse cx="964" cy="700" rx="9.500" ry="12" fill="url(#canva)"/>
<path d="M1041 703l4.500-4 4.500 4" fill="none" stroke="#eee" stroke-width="1.300"/>
<g fill="none" stroke="#ddd"><rect x="1069" y="692" width="5" height="10" rx="2.500"/><path d="M1066 699q0 6 5.500 6t5.500-6M1071.500 705v3M1065 693l13 14"/></g>
<path d="M1105 692l-12 7 6 1 2 7z" fill="none" stroke="#7fc8c0"/>
<g fill="none" stroke="#ddd"><path d="M1155 698q6-5 13 0M1157 701q4-3 9 0M1159 704q2-1.500 5 0"/><circle cx="1161.500" cy="707" r=".8" fill="#ddd"/><path d="M1177 698h3l4-3v12l-4-3h-3zM1186 698q2 3 0 6M1188 696q3 5 0 10"/></g>
<rect x="1196" y="696" width="11" height="9" fill="#eee" rx="1"/><path d="M1201 698l-2 3h2l-1 3" stroke="#222" fill="none"/>
</svg>

<!-- title bar text -->
<div class="t" style="left:84px;top:9px;font-size:9.500px;color:#dcdcdc">G25_3ST_Dashboard&nbsp; • Last saved: 10/18/2025 at 8:57 PM</div>
<div class="t" style="left:553px;top:8px;font-size:11.500px;color:#555">Search</div>
<div class="t" style="left:993px;top:8px;font-size:9.600px;color:#e2e2e2">20912023100044@fci.zu.edu.eg</div>
<div class="t" style="left:1232px;top:36px;font-size:9.500px;color:#fff">Share</div>

<!-- tabs -->
<div class="t c tab" style="left:27px">File</div>
<div class="t c tab" style="left:84px;color:#222;-webkit-text-stroke:.3px #222">Home</div>
<div class="t c tab" style="left:140px">Insert</div>
<div class="t c tab" style="left:205px">Modeling</div>
<div class="t c tab" style="left:269px">View</div>
<div class="t c tab" style="left:330px">Optimize</div>
<div class="t c tab" style="left:392px">Help</div>
<div class="t c tab" style="left:448px;color:#1a7a68;-webkit-text-stroke:.2px #1a7a68">Format</div>
<div class="t c tab" style="left:524px;color:#1a7a68;-webkit-text-stroke:.2px #1a7a68">Data / Drill</div>

<!-- clipboard text -->
<div class="t r" style="left:60px;top:62px;font-size:9.800px">Cut</div>
<div class="t r" style="left:60px;top:82px;font-size:9.800px">Copy</div>
<div class="t r" style="left:60px;top:102px;font-size:9.800px">Format painter</div>
<div class="t c r" style="left:24px;top:92px;color:#c8c8c8">Paste</div>

<!-- ribbon buttons -->
<div class="t c r" style="left:158px;top:92px">Get</div><div class="t c r" style="left:156px;top:105px">data<i class="v"></i></div>
<div class="t c r" style="left:197px;top:92px">Excel</div><div class="t c r" style="left:197px;top:105px">workbook</div>
<div class="t c r" style="left:244px;top:92px">OneLake</div><div class="t c r" style="left:243px;top:105px">catalog<i class="v"></i></div>
<div class="t c r" style="left:283px;top:92px">SQL</div><div class="t c r" style="left:283px;top:105px">Server</div>
<div class="t c r" style="left:316px;top:92px">Enter</div><div class="t c r" style="left:316px;top:105px">data</div>
<div class="t c r" style="left:356px;top:92px">Dataverse</div>
<div class="t c r" style="left:403px;top:92px">Recent</div><div class="t c r" style="left:402px;top:105px">sources<i class="v"></i></div>
<div class="t c r" style="left:464px;top:92px;font-size:9.800px">Transform</div><div class="t c r" style="left:464px;top:105px">data<i class="v"></i></div>
<div class="t c r" style="left:505px;top:92px;font-size:9.800px">Refresh</div><div class="t c r" style="left:504px;top:105px"><i class="v"></i></div>
<div class="t c r" style="left:553px;top:92px">New</div><div class="t c r" style="left:553px;top:105px">visual</div>
<div class="t c r" style="left:586px;top:92px">Text</div><div class="t c r" style="left:586px;top:105px">box</div>
<div class="t c r" style="left:624px;top:92px">More</div><div class="t c r" style="left:623px;top:105px">visuals<i class="v"></i></div>
<div class="t c r" style="left:689px;top:92px">New visual</div><div class="t c r" style="left:688px;top:105px">calculation<i class="v"></i></div>
<div class="t c r" style="left:740px;top:92px">New</div><div class="t c r" style="left:740px;top:105px;font-size:9.800px">measure</div>
<div class="t c r" style="left:780px;top:92px">Quick</div><div class="t c r" style="left:780px;top:105px;font-size:9.800px">measure</div>
<div class="t c r" style="left:838px;top:92px;color:#c9c9c9;font-size:9.800px">Sensitivity</div><div class="t c r" style="left:837px;top:105px"><i class="v" style="border-color:#c9c9c9"></i></div>
<div class="t c r" style="left:893px;top:92px">Publish</div>
<div class="t c r" style="left:972px;top:92px;font-size:10px">Prep data for Copilot</div><div class="t c r" style="left:955px;top:105px">AI</div>

<div class="t c gl" style="left:66px">Clipboard</div>
<div class="t c gl" style="left:283px">Data</div>
<div class="t c gl" style="left:482px">Queries</div>
<div class="t c gl" style="left:591px">Insert</div>
<div class="t c gl" style="left:730px">Calculations</div>
<div class="t c gl" style="left:838px">Sensitivity</div>
<div class="t c gl" style="left:893px">Share</div>
<div class="t c gl" style="left:972px">Copilot</div>

<!-- icon letters -->
<div class="t c" style="left:587px;top:68px;font-size:15px;color:#4c8fc8">A</div>
<div class="t" style="left:685px;top:74px;font:italic 15px 'Liberation Serif',serif;color:#333;line-height:14px">fx</div>
<div class="t c" style="left:17px;top:253px;font-size:5px;color:#555;line-height:6px">DAX</div>
<div class="t c" style="left:17px;top:286px;font-size:5px;color:#555;line-height:6px">TMDL</div>
<div class="t c" style="left:1053px;top:299px;font-size:8px;color:#555">123</div>
<div class="t c" style="left:1053px;top:322px;font-size:12px;font-weight:bold;color:#2f82c4">R</div>
<div class="t c" style="left:936px;top:345px;font-size:13.500px;font-weight:bold;color:#2f82c4">Py</div>
<div class="t c" style="left:959px;top:368px;font-size:6px;color:#777">123</div>

<!-- report text -->
<div class="t" style="left:88px;top:159px;font-size:23.900px;line-height:26px;font-weight:bold;color:#c92c19;-webkit-text-stroke:.6px #c92c19">SALES &amp; MARKETING DASHBOARD</div>
<div class="t c" style="left:61px;top:158px;font-size:13px;font-weight:bold;color:#fff">$</div>
<div class="t c" style="left:60px;top:210px;font-size:9.500px;color:#333">2022</div>
<div class="t c" style="left:60px;top:254px;font-size:9.500px;color:#333">2023</div>
<div class="t c" style="left:60px;top:298px;font-size:9.500px;color:#fff;font-weight:bold">2024</div>
<div class="t" style="left:90px;top:596px;font-size:20px;line-height:20px;font-weight:bold;letter-spacing:2.100px;color:#fff">SALFORD.CO</div>

<div class="t" style="left:104px;top:222px;font-size:10.500px;font-weight:bold;color:#111">Revenue</div>
<div class="t" style="left:316px;top:222px;font-size:10.500px;font-weight:bold;color:#111">Profit</div>
<div class="t" style="left:528px;top:222px;font-size:10.500px;font-weight:bold;color:#111">Cost</div>
<div class="t num" style="left:104px">410K</div>
<div class="t num" style="left:316px">86K</div>
<div class="t num" style="left:528px">324K</div>
<div class="t gr" style="left:104px">Growth <span>-34.89%</span></div>
<div class="t gr" style="left:316px">Growth <span>-37.16%</span></div>
<div class="t gr" style="left:528px">Growth <span>-34.26%</span></div>
<div class="t c" style="left:265px;top:229px;font-size:13px;font-weight:bold;color:#fff">$</div>

<!-- table text -->
<div class="t" style="left:230px;top:376px;font-size:8.500px;color:#444">Country</div>
<div class="t" style="left:302px;top:376px;font-size:8.500px;color:#444">Country Flag.Flag</div>
<div class="t" style="left:230px;top:394px;font-size:8.500px;color:#555">Brazil</div>
<div class="t" style="left:230px;top:446px;font-size:8.500px;color:#555">Canada</div>
<div class="t" style="left:230px;top:498px;font-size:8.500px;color:#555">France</div>
<div class="t" style="left:230px;top:550px;font-size:8.500px;color:#555">Germany</div>

<!-- filters -->
<div class="t" style="left:899px;top:185px;font-size:11.800px;font-weight:bold;color:#333;writing-mode:vertical-rl">Filters</div>

<!-- viz text -->
<div class="t" style="left:926px;top:143px;font-size:12.500px;font-weight:bold;color:#333">Visualizations</div>
<div class="t" style="left:926px;top:165px;font-size:10px;color:#333;font-weight:normal">Build visual</div>
<div class="t" style="left:929px;top:422px;font-size:9.500px;color:#555">Columns</div>
<div class="t" style="left:929px;top:446px;font-size:9.500px;color:#444">Country</div>
<div class="t" style="left:929px;top:466px;font-size:9.500px;color:#444">Country Flag.Flag</div>
<div class="t" style="left:930px;top:499px;font-size:10px;color:#444">Drill through</div>
<div class="t" style="left:930px;top:520px;font-size:9.800px;color:#444">Cross-report</div>
<div class="t" style="left:930px;top:542px;font-size:9.800px;color:#444">Keep all filters</div>
<div class="t" style="left:1037px;top:520px;font-size:7px;color:#777">Off</div>
<div class="t" style="left:1029px;top:543px;font-size:7px;color:#fff">On</div>
<div class="t" style="left:930px;top:568px;font-size:10px;color:#444">Add drill-through fields here</div>

<!-- data text -->
<div class="t" style="left:1077px;top:143px;font-size:13px;font-weight:bold;color:#333">Data</div>
<div class="t" style="left:1101px;top:176px;font-size:11px;color:#666">Search</div>
<div class="t d" style="left:1109px;top:203px">Country Flag</div>
<div class="t d" style="left:1109px;top:223px">DIM_Country_Region</div>
<div class="t d" style="left:1138px;top:243px">Country</div>
<div class="t d" style="left:1138px;top:263px">Country Flag.Flag</div>
<div class="t d" style="left:1138px;top:283px">Country_Region ID</div>
<div class="t d" style="left:1138px;top:303px">Region</div>
<div class="t d" style="left:1109px;top:323px">DIM_Customer</div>
<div class="t d" style="left:1109px;top:343px">DIM_CustomerPlan</div>
<div class="t d" style="left:1109px;top:363px">DIM_Date</div>
<div class="t d" style="left:1109px;top:383px">DIM_LeadSource</div>
<div class="t d" style="left:1109px;top:403px">DIM_Marketing</div>
<div class="t d" style="left:1109px;top:423px">DIM_Product</div>
<div class="t d" style="left:1109px;top:443px">DIM_Sales_Channel</div>
<div class="t d" style="left:1109px;top:463px">DIM_SalesRep</div>
<div class="t d" style="left:1109px;top:483px">Fact_sales_data</div>
<div class="t d" style="left:1109px;top:503px">Measuress</div>
<div class="t d" style="left:1109px;top:523px">product_stock_table</div>

<!-- taskbar text -->
<div class="t" style="left:315px;top:694px;font-size:11px;color:#e4e4e4">Search</div>
<div class="t c" style="left:34px;top:686px;font-size:8px;font-weight:bold;color:#222">9+</div>
<div class="t c" style="left:679px;top:685px;font-size:8px;color:#fff">11</div>
<div class="t c" style="left:927px;top:693px;font-size:5px;color:#fff">zoom</div>
<div class="t c" style="left:964px;top:693px;font-size:5.500px;color:#fff">Canva</div>
<div class="t c" style="left:1130px;top:694px;font-size:9.800px;color:#e4e4e4">ENG</div>
<div class="t c" style="left:1243px;top:686px;font-size:10.500px;color:#eee">10:24 PM</div>
<div class="t c" style="left:1243px;top:701px;font-size:9.500px;color:#ddd;font-family:'DejaVu Sans',sans-serif"><bdo dir="ltr">٢٠٢٥/١٠/٢٢</bdo></div>

<!-- watermark -->
<div class="t" dir="rtl" style="left:550px;top:628px;width:180px;height:52px;overflow:hidden;font:bold 52px/58px 'DejaVu Sans',sans-serif;color:#e2e2e2;text-align:center">نفذلي</div>
<div class="t" style="left:559px;top:690px;font-size:27.500px;line-height:27px;color:#cfcfcf;opacity:.88;letter-spacing:.3px">nafezly.com</div>
</body></html>
